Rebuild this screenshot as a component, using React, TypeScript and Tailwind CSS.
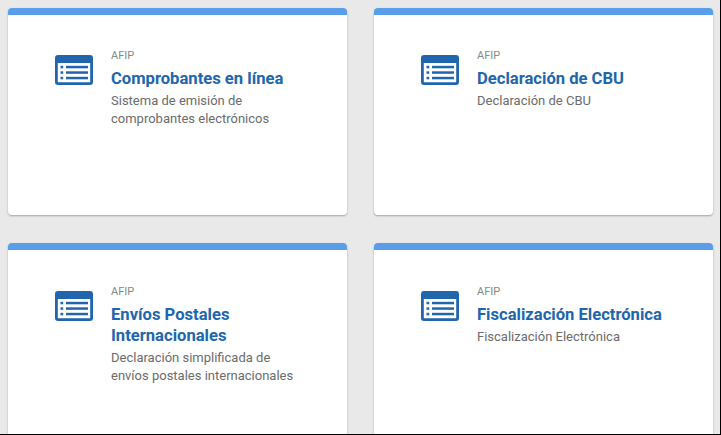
const items = [
  { title: ["Comprobantes en línea"], desc: ["Sistema de emisión de", "comprobantes electrónicos"], pad: "pt-[40px]" },
  { title: ["Declaración de CBU"], desc: ["Declaración de CBU"], pad: "pt-[40px]" },
  { title: ["Envíos Postales", "Internacionales"], desc: ["Declaración simplificada de", "envíos postales internacionales"], pad: "pt-[41px]" },
  { title: ["Fiscalización Electrónica"], desc: ["Fiscalización Electrónica"], pad: "pt-[41px]" },
];

function ListIcon() {
  return (
    <svg width="38" height="30" viewBox="0 0 38 30" className="shrink-0 block">
      <path fillRule="evenodd" fill="#2166ac" d="M3 0h32a3 3 0 0 1 3 3v24a3 3 0 0 1-3 3H3a3 3 0 0 1-3-3V3a3 3 0 0 1 3-3zM2.800 8v18.700a.5.5 0 0 0 .5.5h31.400a.5.5 0 0 0 .5-.5V8z" />
      <rect x="5.500" y="10.800" width="2.700" height="2.500" fill="#2166ac" />
      <rect x="5.500" y="16.300" width="2.700" height="2.500" fill="#2166ac" />
      <rect x="5.500" y="21.800" width="2.700" height="2.500" fill="#2166ac" />
      <rect x="11" y="10.800" width="22" height="2.500" fill="#2166ac" />
      <rect x="11" y="16.300" width="22" height="2.500" fill="#2166ac" />
      <rect x="11" y="21.800" width="22" height="2.500" fill="#2166ac" />
    </svg>
  );
}

export default function App() {
  return (
    <div className="w-[721px] h-[435px] overflow-hidden bg-[#e9e9e9] border-r border-b border-black pl-2 pt-2 font-['Roboto',sans-serif]">
      <div className="grid grid-cols-[338.5px_339px] auto-rows-[207px] gap-x-[27.5px] gap-y-[28px]">
        {items.map((it) => (
          <div key={it.title[0]} className="bg-white rounded-[4px] overflow-hidden shadow-[0_1px_2px_rgba(0,0,0,0.3)]">
            <div className="h-[7px] bg-[#5a9de8]" />
            <div className={`flex pl-[46.5px] ${it.pad}`}>
              <div className="w-[56.500px] shrink-0">
                <ListIcon />
              </div>
              <div className="-mt-[6px]">
                <div className="text-[11px] leading-[14px] text-[#888888]">AFIP</div>
                <div className="mt-[5px] text-[16.6px] leading-[21px] font-bold text-[#2166ac]">
                  {it.title.map((t) => (
                    <div key={t}>{t}</div>
                  ))}
                </div>
                <div className="mt-[3px] text-[13px] leading-[18px] text-[#6b6b6b]">
                  {it.desc.map((t) => (
                    <div key={t}>{t}</div>
                  ))}
                </div>
              </div>
            </div>
          </div>
        ))}
      </div>
    </div>
  );
}
